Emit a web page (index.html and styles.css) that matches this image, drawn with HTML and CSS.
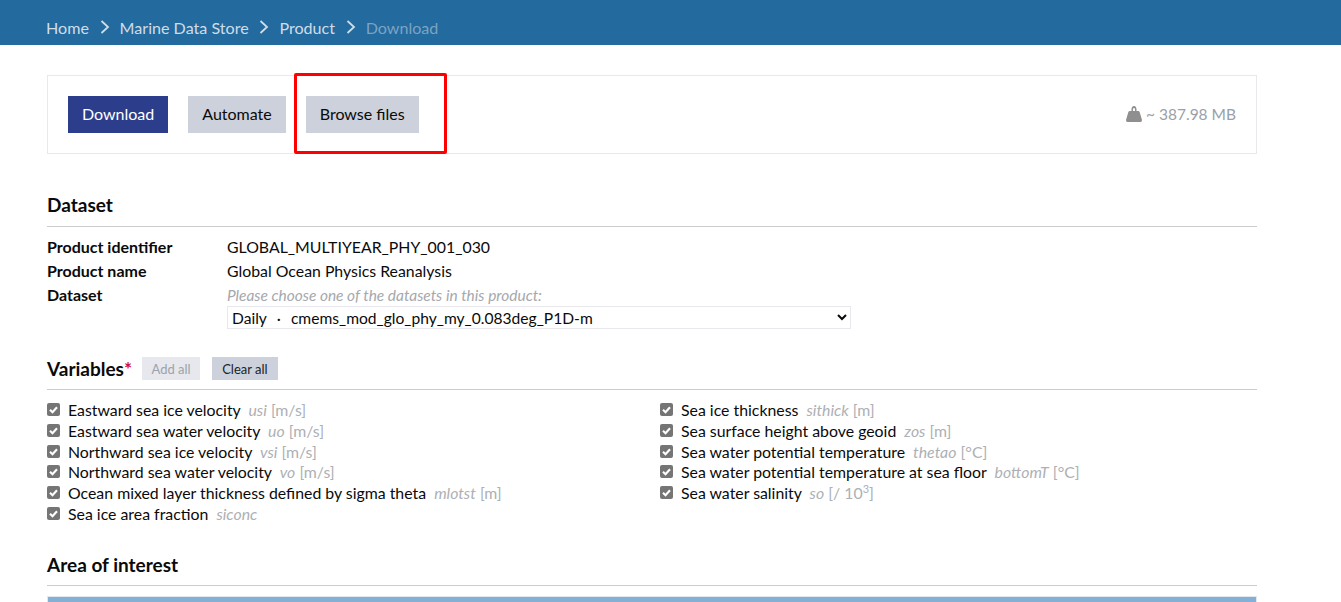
FILE: index.html
```html
<!DOCTYPE html>
<html lang="en">
<head>
<meta charset="utf-8">
<title>Download</title>
<link rel="stylesheet" href="styles.css">
</head>
<body>
<svg class="sprite" width="0" height="0"><symbol id="check" viewBox="0 0 13 13"><rect width="13" height="13" rx="2" fill="#757575"/><path d="M3 6.800 5.500 9.300 10 4.200" fill="none" stroke="#fff" stroke-width="2.100"/></symbol></svg>
<header class="topbar">
  <nav class="crumbs">
    <a>Home</a>
    <svg class="chev" width="10" height="14" viewBox="0 0 10 14"><path d="M1.500 1 8 7 1.500 13" fill="none" stroke="#cfdde9" stroke-width="1.800"/></svg>
    <a>Marine Data Store</a>
    <svg class="chev" width="10" height="14" viewBox="0 0 10 14"><path d="M1.500 1 8 7 1.500 13" fill="none" stroke="#cfdde9" stroke-width="1.800"/></svg>
    <a>Product</a>
    <svg class="chev" width="10" height="14" viewBox="0 0 10 14"><path d="M1.500 1 8 7 1.500 13" fill="none" stroke="#cfdde9" stroke-width="1.800"/></svg>
    <span class="current">Download</span>
  </nav>
</header>
<main class="content">
  <section class="actions">
    <div class="btns">
      <button class="btn primary">Download</button>
      <button class="btn">Automate</button>
      <button class="btn">Browse files</button>
    </div>
    <div class="size">
      <svg width="16" height="16" viewBox="0 0 16 16"><path fill="#8f8f8f" fill-rule="evenodd" d="M5.500 5C5 2 6.300 0 8 0s3 2 2.500 5h2q1 0 1.300 1.500L16 14q0 2-1.500 2h-13Q0 16 0 14L2.200 6.500Q2.500 5 3.500 5ZM7 5h2c.3-1.500 0-3-1-3S6.700 3.500 7 5Z"/></svg>
      <span>~ 387.98 MB</span>
    </div>
    <div class="highlight"></div>
  </section>

  <section class="dataset">
    <h2 class="title">Dataset</h2>
    <dl class="info">
      <dt>Product identifier</dt><dd>GLOBAL_MULTIYEAR_PHY_001_030</dd>
      <dt>Product name</dt><dd>Global Ocean Physics Reanalysis</dd>
      <dt>Dataset</dt>
      <dd>
        <em class="hint">Please choose one of the datasets in this product:</em>
        <select class="picker"><option>Daily &nbsp;·&nbsp; cmems_mod_glo_phy_my_0.083deg_P1D-m</option></select>
      </dd>
    </dl>
  </section>

  <section class="variables">
    <div class="title varhead">
      <h2>Variables<span class="req">*</span></h2>
      <button class="mini off">Add all</button>
      <button class="mini">Clear all</button>
    </div>
    <div class="vargrid">
      <ul>
        <li><svg class="cb"><use href="#check"/></svg><span>Eastward sea ice velocity <i>usi</i> <u>[m/s]</u></span></li>
        <li><svg class="cb"><use href="#check"/></svg><span>Eastward sea water velocity <i>uo</i> <u>[m/s]</u></span></li>
        <li><svg class="cb"><use href="#check"/></svg><span>Northward sea ice velocity <i>vsi</i> <u>[m/s]</u></span></li>
        <li><svg class="cb"><use href="#check"/></svg><span>Northward sea water velocity <i>vo</i> <u>[m/s]</u></span></li>
        <li><svg class="cb"><use href="#check"/></svg><span>Ocean mixed layer thickness defined by sigma theta <i>mlotst</i> <u>[m]</u></span></li>
        <li><svg class="cb"><use href="#check"/></svg><span>Sea ice area fraction <i>siconc</i></span></li>
      </ul>
      <ul>
        <li><svg class="cb"><use href="#check"/></svg><span>Sea ice thickness <i>sithick</i> <u>[m]</u></span></li>
        <li><svg class="cb"><use href="#check"/></svg><span>Sea surface height above geoid <i>zos</i> <u>[m]</u></span></li>
        <li><svg class="cb"><use href="#check"/></svg><span>Sea water potential temperature <i>thetao</i> <u>[°C]</u></span></li>
        <li><svg class="cb"><use href="#check"/></svg><span>Sea water potential temperature at sea floor <i>bottomT</i> <u>[°C]</u></span></li>
        <li><svg class="cb"><use href="#check"/></svg><span>Sea water salinity <i>so</i> <u>[/ 10<sup>3</sup>]</u></span></li>
      </ul>
    </div>
  </section>

  <section class="area">
    <h2 class="title">Area of interest</h2>
    <div class="mapbar"></div>
  </section>
</main>
</body>
</html>
```
FILE: styles.css
```css
* { box-sizing: border-box; }
html, body { margin: 0; height: 602px; overflow: hidden; background: #fff; }
body { font-family: Lato, "Liberation Sans", sans-serif; font-size: 15.85px; color: #0a0a0a; }
.sprite { position: absolute; }

.topbar { height: 45px; background: #236a9e; display: flex; align-items: center; padding: 9px 0 0 46px; }
.crumbs { display: flex; align-items: center; font-size: 16.1px; color: #cfdde9; }
.chev { margin: 0 10px 0 10.7px; }
.current { color: #7ba3c3; }

.content { width: 1210px; margin-left: 47px; }

.actions { position: relative; height: 79px; margin-top: 30px; border: 1px solid #e8e9ec; display: flex; align-items: center; justify-content: space-between; padding: 0 20px; }
.btns { display: flex; gap: 20px; }
.btn { height: 37px; padding: 0 14px 2px; border: 0; background: #ccd1db; color: #0a0a0a; font: 16px Lato, sans-serif; }
.btn.primary { background: #2b3d8b; color: #fff; }
.size { display: flex; align-items: center; gap: 4px; margin-bottom: 1px; color: #9a9fa8; font-size: 15.5px; }
.highlight { position: absolute; left: 246px; top: -3px; width: 153px; height: 81px; border: 3px solid #f00; border-radius: 2px; }

.title { margin: 0; height: 33px; font-size: 19px; line-height: 24px; font-weight: 700; border-bottom: 1px solid #ccc; }
.dataset { margin-top: 39px; }
.dataset .title { height: 34px; }
.info { display: grid; grid-template-columns: 180px 1fr; margin: 8px 0 0; line-height: 24px; }
.info dt { font-weight: 700; font-size: 16px; }
.info dd { margin: 0; }
.hint { display: block; color: #a5a8ad; font-size: 15.45px; }
.picker { display: block; width: 624px; height: 23px; margin-top: -1px; padding: 0; background: #fff; border: 1px solid #e8e8ee; font: 15.6px Lato, sans-serif; word-spacing: 1.1px; color: #0a0a0a; }

.variables { margin-top: 28px; }
.varhead { display: flex; align-items: flex-start; gap: 10px; }
.varhead h2 { margin: 0; font: inherit; }
.req { color: #d0103a; }
.mini { height: 23px; padding: 0 10px; border: 0; background: #ccd1db; color: #222; font: 13px Lato, sans-serif; }
.mini.off { padding: 0 9.5px; background: #e6e8ed; color: #9ea2a9; }
.mini + .mini { margin-left: 2px; }

.vargrid { display: grid; grid-template-columns: 613px 1fr; margin-top: 9.4px; }
.vargrid ul { margin: 0; padding: 0; list-style: none; }
.vargrid li { display: flex; align-items: center; height: 20.7px; white-space: nowrap; }
.cb { width: 13px; height: 13px; margin-right: 8px; flex: none; }
.vargrid i { color: #adb0b5; margin-left: 4px; }
.vargrid u { text-decoration: none; color: #adb0b5; }
sup { font-size: 11px; line-height: 0; }

.area { margin-top: 29.6px; }
.mapbar { height: 8px; margin-top: 10px; background: #85b0d6; border: 1px solid #e3e8ee; border-bottom: 0; }
```
